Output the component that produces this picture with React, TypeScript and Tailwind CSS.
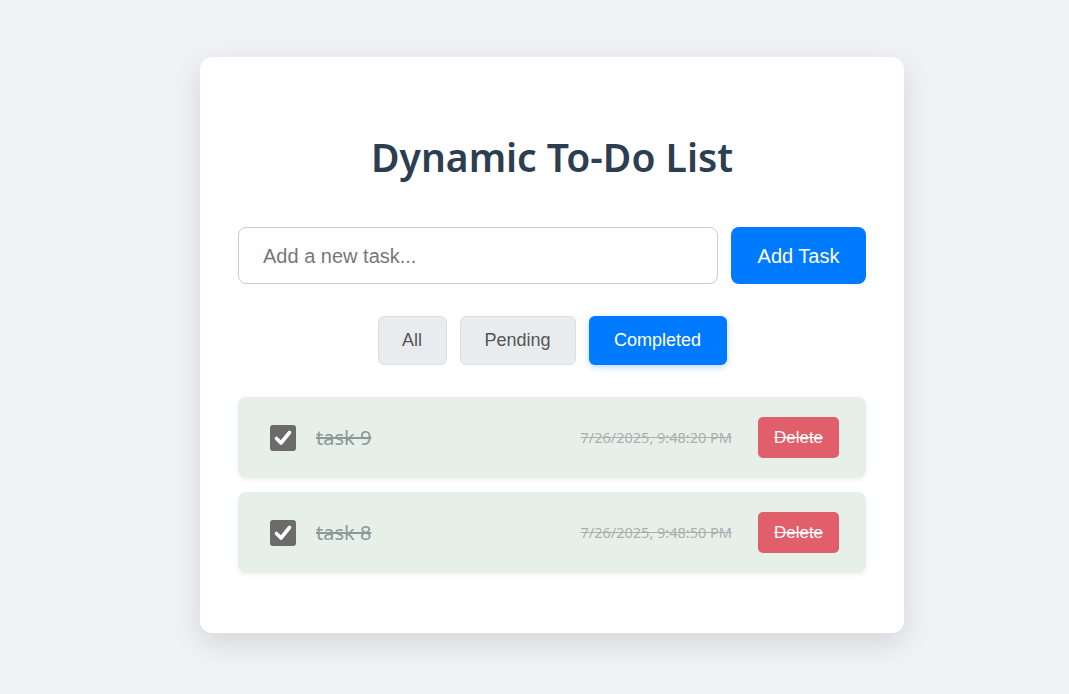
import React from "react";

const tasks = [
  { id: 9, text: "task 9", time: "7/26/2025, 9:48:20 PM" },
  { id: 8, text: "task 8", time: "7/26/2025, 9:48:50 PM" },
];

function Check() {
  return (
    <div className="w-[26px] h-[26px] rounded-[3px] bg-[#6b6b6b] flex items-center justify-center shrink-0">
      <svg width="20" height="20" viewBox="0 0 20 20">
        <path d="M3.5 10.5 L8 15 L16.5 4.5" fill="none" stroke="#fff" strokeWidth="3.6" strokeLinecap="round" strokeLinejoin="round" />
      </svg>
    </div>
  );
}

export default function App() {
  return (
    <div className="min-h-[694px] bg-[#f0f2f5] pl-[200px] pt-[57px] font-['Liberation_Sans',Arial,sans-serif]">
      <div className="w-[704px] bg-white rounded-[12px] shadow-[0_10px_30px_rgba(0,0,0,0.12)] px-[38px] pt-[73px] pb-[60px] flex flex-col">
        <h1 className="text-center text-[39px] leading-[54px] font-semibold text-[#2c3e50] font-['Noto_Sans',sans-serif]">
          Dynamic To-Do List
        </h1>
        <div className="mt-[43px] flex gap-[13px]">
          <div className="flex-1 h-[57px] border border-[#ccc] rounded-[8px] px-[24px] flex items-center text-[20px] text-[#777]">
            Add a new task...
          </div>
          <div className="w-[135px] h-[57px] rounded-[8px] bg-[#007bff] text-white text-[20px] flex items-center justify-center">
            Add Task
          </div>
        </div>
        <div className="mt-[32px] flex justify-center gap-[13px] text-[18px]">
          <div className="w-[69px] h-[49px] rounded-[6px] bg-[#e9ecef] border border-[#dcdfe3] text-[#555] flex items-center justify-center">All</div>
          <div className="w-[116px] h-[49px] rounded-[6px] bg-[#e9ecef] border border-[#dcdfe3] text-[#555] flex items-center justify-center">Pending</div>
          <div className="w-[138px] h-[49px] rounded-[6px] bg-[#007bff] text-white flex items-center justify-center shadow-[0_2px_6px_rgba(0,123,255,0.3)]">Completed</div>
        </div>
        <div className="mt-[32px] flex flex-col gap-[14px]">
          {tasks.map((t) => (
            <div key={t.id} className="h-[81px] rounded-[8px] bg-[#e6f0e9] shadow-[0_2px_5px_rgba(0,0,0,0.06)] pl-[32px] pr-[27px] flex items-center">
              <Check />
              <span className="ml-[20px] flex-1 text-[20px] text-[#8b9998] line-through font-['Noto_Sans',sans-serif]">{t.text}</span>
              <span className="text-[14.5px] text-[#a9b1b1] line-through font-['Noto_Sans',sans-serif]">{t.time}</span>
              <div className="ml-[26px] w-[81px] h-[41px] rounded-[5px] bg-[#e15e6b] text-white text-[17px] line-through flex items-center justify-center">
                Delete
              </div>
            </div>
          ))}
        </div>
      </div>
    </div>
  );
}
